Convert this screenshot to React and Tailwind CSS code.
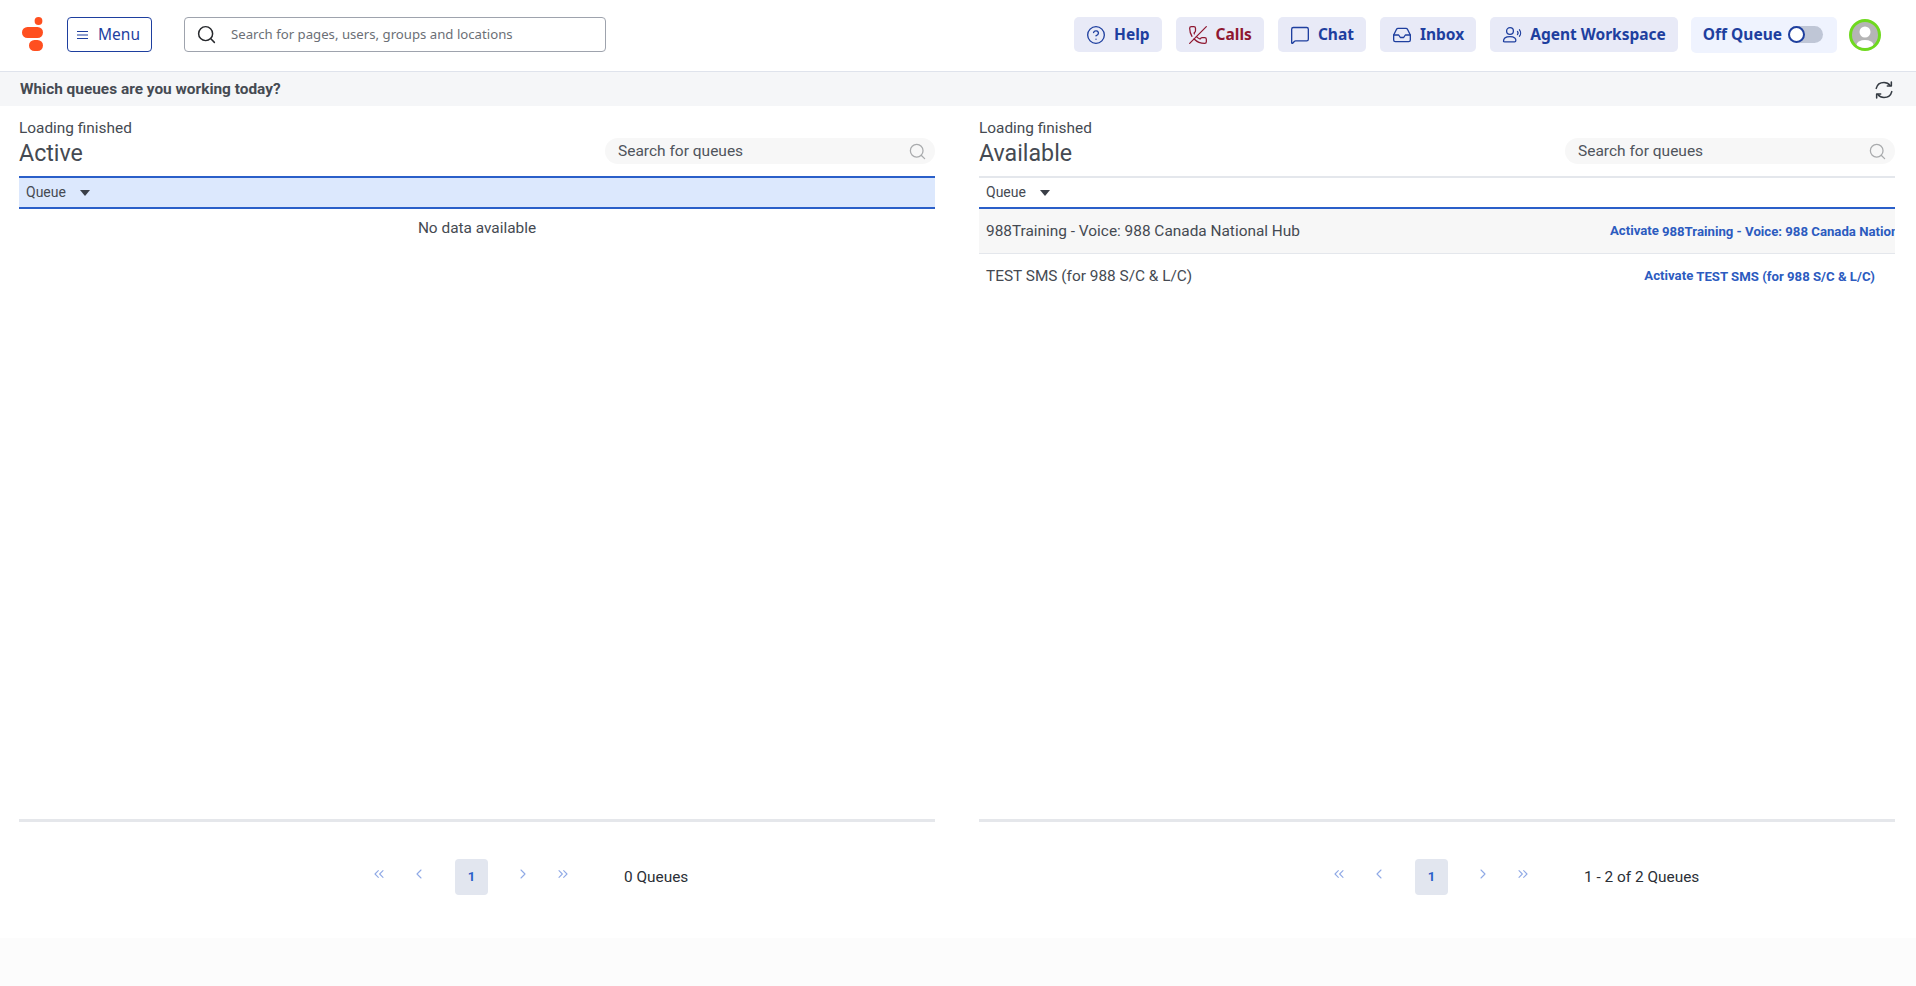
import React from 'react';
import { CircleHelp, PhoneOff, MessageSquare, Inbox, Search, ChevronsLeft, ChevronLeft, ChevronRight, ChevronsRight } from 'lucide-react';

const navButtonClass = 'flex h-[35px] items-center gap-[8px] rounded-[5px] bg-[#e8eaf7] px-[12px] text-[15.5px] font-bold text-[#1e3f9f]';

function Logo() {
  return (
    <svg width="22" height="34" viewBox="0 0 22 34" className="shrink-0">
      <circle cx="16.5" cy="4" r="3.9" fill="#ff4f1f" />
      <rect x="0" y="10" width="21" height="11" rx="5.5" fill="#ff4f1f" />
      <rect x="7" y="23" width="14" height="11" rx="5.5" fill="#ff4f1f" />
    </svg>
  );
}

function AgentIcon() {
  return (
    <svg width="20" height="20" viewBox="0 0 20 20" fill="none" stroke="currentColor" strokeWidth="1.3" strokeLinecap="round">
      <circle cx="8" cy="6" r="3.4" />
      <path d="M1.5 16.2c0-3 2.6-4.6 6.5-4.6 2 0 3.6.4 4.8 1.3 1 .8 1.2 1.9 1 3-.1.6-.5.9-1.1.9H2.8c-.8 0-1.3-.1-1.3-.6z" />
      <path d="M15.5 6.5c.7.8.7 2.2 0 3" />
      <path d="M17.5 4.8c1.4 1.7 1.4 4.7 0 6.4" />
    </svg>
  );
}

function RefreshIcon() {
  return (
    <svg width="20" height="20" viewBox="0 0 18 18" fill="none" stroke="#343a42" strokeWidth="1.4" strokeLinecap="round" strokeLinejoin="round">
      <path d="M2 7.5C2.8 4.3 5.6 2.2 9 2.2c2.2 0 4.2 1 5.5 2.7" />
      <path d="M15.6 1.8v3.6H12" />
      <path d="M16 10.5c-.8 3.2-3.6 5.3-7 5.3-2.2 0-4.2-1-5.5-2.7" />
      <path d="M2.4 16.2v-3.6H6" />
    </svg>
  );
}

function Avatar() {
  return (
    <div className="ml-[12px] flex h-8 w-8 items-center justify-center overflow-hidden rounded-full border-[3px] border-[#6fd91f] bg-[#b5b5b5]">
      <svg width="26" height="26" viewBox="0 0 26 26" fill="#fff">
        <circle cx="13" cy="10" r="5.5" />
        <ellipse cx="13" cy="23" rx="8.5" ry="5" />
      </svg>
    </div>
  );
}

function Header() {
  return (
    <header className="flex h-[72px] items-center border-b border-[#dfe3ec] bg-white pb-[2px] font-['Noto_Sans',sans-serif]">
      <div className="mb-[2px] ml-[22px]"><Logo /></div>
      <button className="ml-[23px] flex h-[35px] w-[85px] items-center gap-[10px] rounded-[4px] border border-[#1e3f9f] pl-[9px] text-[15.5px] text-[#1e3f9f]">
        <svg width="11" height="10" viewBox="0 0 11 10" stroke="currentColor" strokeWidth="1.2"><path d="M0 1.5h11M0 5h11M0 8.5h11" /></svg>
        Menu
      </button>
      <div className="ml-[32px] flex h-[35px] w-[422px] items-center gap-[14px] rounded-[4px] border border-[#9ea3ad] pl-[11px] text-[13.2px] text-[#6b6f76]">
        <Search size={21} strokeWidth={1.7} className="text-[#26282c]" />
        <span>Search for pages, users, groups and locations</span>
      </div>
      <div className="ml-auto flex items-center pr-[35px]">
        <div className="flex items-center gap-[14px]">
          <button className={navButtonClass}><CircleHelp size={20} strokeWidth={1.6} />Help</button>
          <button className={navButtonClass + ' text-[#8f1730]'}><PhoneOff size={20} strokeWidth={1.5} />Calls</button>
          <button className={navButtonClass}><MessageSquare size={20} strokeWidth={1.6} />Chat</button>
          <button className={navButtonClass}><Inbox size={20} strokeWidth={1.6} />Inbox</button>
          <button className={navButtonClass}><AgentIcon />Agent Workspace</button>
          <div className="-ml-[1px] flex h-[36px] items-center gap-[6px] rounded-[5px] bg-[#eff3fe] pl-[12px] pr-[14px] text-[15.5px] font-bold text-[#1e3f9f]">
            Off Queue
            <div className="flex h-[17px] w-[35px] items-center rounded-full bg-[#bfc6d6]">
              <div className="h-[17px] w-[17px] rounded-full border-[2.5px] border-[#1e3f9f] bg-white" />
            </div>
          </div>
        </div>
        <Avatar />
      </div>
    </header>
  );
}

function Pager({ label }) {
  const iconClass = 'flex h-[36px] w-10 items-center justify-center pb-[7px] text-[#8fa9e6]';
  return (
    <div className="flex h-[116px] items-start pl-[340px] pt-[37px] font-['Roboto',sans-serif]">
      <span className={iconClass}><ChevronsLeft size={16} strokeWidth={1.6} /></span>
      <span className={iconClass}><ChevronLeft size={16} strokeWidth={1.6} /></span>
      <span className="ml-4 flex h-[36px] w-[33px] items-center justify-center rounded-[4px] bg-[#e2e6ef] text-[13px] font-bold text-[#2a5fc9]">1</span>
      <span className={iconClass + ' ml-[15px]'}><ChevronRight size={16} strokeWidth={1.6} /></span>
      <span className={iconClass}><ChevronsRight size={16} strokeWidth={1.6} /></span>
      <span className="ml-[41px] flex h-[36px] items-center pt-[1px] text-[15.4px] text-[#2b2f36]">{label}</span>
    </div>
  );
}

function QueueHeader({ sorted }) {
  return (
    <div className={'flex h-[33px] items-center gap-[14px] border-b-2 border-t-2 border-b-[#2a5fc9] pl-[7px] text-[14px] text-[#454a52] ' + (sorted ? 'border-t-[#2a5fc9] bg-[#dce8fd]' : 'border-t-[#e4e7ec] bg-white')}>
      Queue
      <svg width="10" height="6" viewBox="0 0 10 6" fill="#3a3f47"><path d="M0 0h10L5 6z" /></svg>
    </div>
  );
}

function Panel({ title, pagerLabel, children, sorted }) {
  return (
    <section className="flex w-[916px] flex-col">
      <div className="flex h-[70px] items-start justify-between">
        <div className="pt-[12px] text-[#454a52]">
          <div className="text-[15.4px] leading-[20px]">Loading finished</div>
          <div className="text-[23.2px] leading-[30px]">{title}</div>
        </div>
        <div className="mt-[32px] flex h-[26px] w-[330px] items-center justify-between rounded-full bg-[#f7f7f7] pl-[13px] pr-[8px] pt-[1px] text-[15.5px] text-[#4f545c]">
          <span>Search for queues</span>
          <Search size={19} strokeWidth={1.6} className="text-[#a9abad]" />
        </div>
      </div>
      <QueueHeader sorted={sorted} />
      <div className="flex-1 overflow-hidden">{children}</div>
      <div className="h-[3px] bg-[#e5e7eb]" />
      <Pager label={pagerLabel} />
    </section>
  );
}

function ActivateLabel({ name }) {
  return (
    <span className="flex shrink-0 items-center gap-[3px] whitespace-nowrap text-[13.2px] font-bold text-[#2c5bbf]">
      <span className="pb-[2px]">Activate</span>
      <span className="pt-[1px]">{name}</span>
    </span>
  );
}

export default function App() {
  return (
    <div className="flex h-[986px] flex-col overflow-hidden bg-white font-['Roboto',sans-serif]">
      <Header />
      <div className="flex h-[34px] items-center justify-between bg-[#f5f6f8] pl-[20px] pr-[22px] pt-[1px] text-[15.4px] font-bold text-[#454a52]">
        <span>Which queues are you working today?</span>
        <RefreshIcon />
      </div>
      <main className="flex flex-1 justify-between pl-[19px] pr-[21px]">
        <Panel title="Active" pagerLabel="0 Queues" sorted>
          <div className="pt-[9px] text-center text-[15.4px] leading-[20px] text-[#454a52]">No data available</div>
        </Panel>
        <Panel title="Available" pagerLabel="1 - 2 of 2 Queues">
          <div className="flex h-[45px] items-center overflow-hidden border-b border-[#e4e7ec] bg-[#f7f7f7] pt-[1px] text-[15.4px] text-[#454a52]">
            <span className="w-[631px] shrink-0 pl-[7px]">988Training - Voice: 988 Canada National Hub</span>
            <ActivateLabel name="988Training - Voice: 988 Canada National Hub" />
          </div>
          <div className="flex h-[45px] items-center justify-between pl-[7px] pr-[20px] text-[15.4px] text-[#454a52]">
            <span>TEST SMS (for 988 S/C &amp; L/C)</span>
            <ActivateLabel name="TEST SMS (for 988 S/C & L/C)" />
          </div>
        </Panel>
      </main>
      <footer className="h-[48px] bg-[#fcfcfc]" />
    </div>
  );
}
